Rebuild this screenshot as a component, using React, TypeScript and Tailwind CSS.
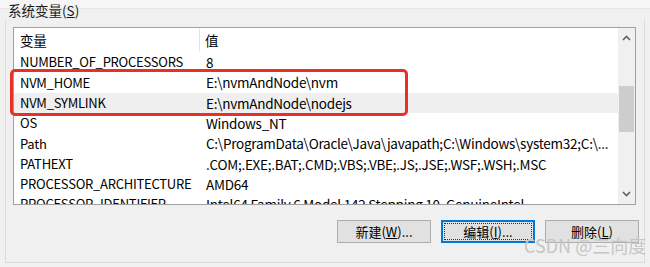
import React from "react"

const font = { fontFamily: '"Noto Sans CJK SC", "Noto Sans", sans-serif' }

const rows: [string, string][] = [
  ["NUMBER_OF_PROCESSORS", "8"],
  ["NVM_HOME", "E:\\nvmAndNode\\nvm"],
  ["NVM_SYMLINK", "E:\\nvmAndNode\\nodejs"],
  ["OS", "Windows_NT"],
  ["Path", "C:\\ProgramData\\Oracle\\Java\\javapath;C:\\Windows\\system32;C:\\..."],
  ["PATHEXT", ".COM;.EXE;.BAT;.CMD;.VBS;.VBE;.JS;.JSE;.WSF;.WSH;.MSC"],
  ["PROCESSOR_ARCHITECTURE", "AMD64"],
  ["PROCESSOR_IDENTIFIER", "Intel64 Family 6 Model 142 Stepping 10, GenuineIntel"],
]

function Chevron({ down }: { down?: boolean }) {
  return (
    <svg width="9" height="6" viewBox="0 0 9 6" className={down ? "rotate-180" : ""}>
      <path d="M1 5 L4.5 1.5 L8 5" fill="none" stroke="#606060" strokeWidth="1.6" />
    </svg>
  )
}

export default function App() {
  return (
    <div
      className="relative w-[650px] h-[267px] overflow-hidden bg-[linear-gradient(#f6f6f6_0_8px,#e6e6e6_8px_9px,#f0f0f0_9px)] text-black"
      style={font}
    >
      <div className="h-[19px] pl-[8px] pt-[2px] text-[13.5px] leading-[16px] text-[#1a1a1a]">
        系统变量(<span className="underline">S</span>)
      </div>

      <div className="mx-[5px] h-[244px] border-x border-b border-[#dcdcdc] pl-[7px] pr-[4px] pt-[8px]">
        <div className="flex h-[178px] w-[623px] border border-[#a0a0a0] bg-white">
          <div className="min-w-0 flex-1 overflow-hidden text-[13.5px] tracking-[-0.25px]">
            <div className="flex h-[24px] items-center">
              <div className="flex h-full w-[186px] shrink-0 items-center border-r border-[#e5e5e5] pl-[6px]">变量</div>
              <div className="pl-[5px]">值</div>
            </div>
            {rows.map(([k, v], i) => (
              <div
                key={k}
                className={`flex h-[20.3px] items-center whitespace-nowrap ${i === 2 ? "bg-[#efefef]" : ""}`}
              >
                <div className="w-[186px] shrink-0 pl-[6px] text-[13px]">{k}</div>
                <div className="pl-[6px]">{v}</div>
              </div>
            ))}
          </div>
          <div className="flex w-[17px] shrink-0 flex-col items-center bg-[#f0f0f0]">
            <div className="flex h-[20px] items-center justify-center">
              <Chevron />
            </div>
            <div className="mt-[38px] h-[46px] w-[15px] bg-[#cdcdcd]" />
            <div className="flex-1" />
            <div className="flex h-[20px] items-center justify-center">
              <Chevron down />
            </div>
          </div>
        </div>

        <div className="mt-[15px] flex justify-end gap-[10px] pr-[1px] text-[13px]">
          <button className="h-[23px] w-[94px] border border-[#adadad] bg-[#e1e1e1]">
            新建(<span className="underline">W</span>)...
          </button>
          <button className="h-[23px] w-[94px] border-2 border-[#0078d7] bg-[#e1e1e1] p-[1px]">
            <span className="flex h-full w-full items-center justify-center border border-dotted border-[#333]">
              编辑(<span className="underline">I</span>)...
            </span>
          </button>
          <button className="h-[23px] w-[94px] border border-[#adadad] bg-[#e1e1e1]">
            删除(<span className="underline">L</span>)
          </button>
        </div>
      </div>

      <div className="absolute left-[10px] top-[69px] h-[47px] w-[398px] rounded-[5px] border-[3px] border-[#e8302b]" />

      <div className="absolute left-[524px] top-[233px] whitespace-nowrap text-[18px] leading-[24px] text-[#c6c6c6]">
        CSDN @三向度
      </div>
    </div>
  )
}
